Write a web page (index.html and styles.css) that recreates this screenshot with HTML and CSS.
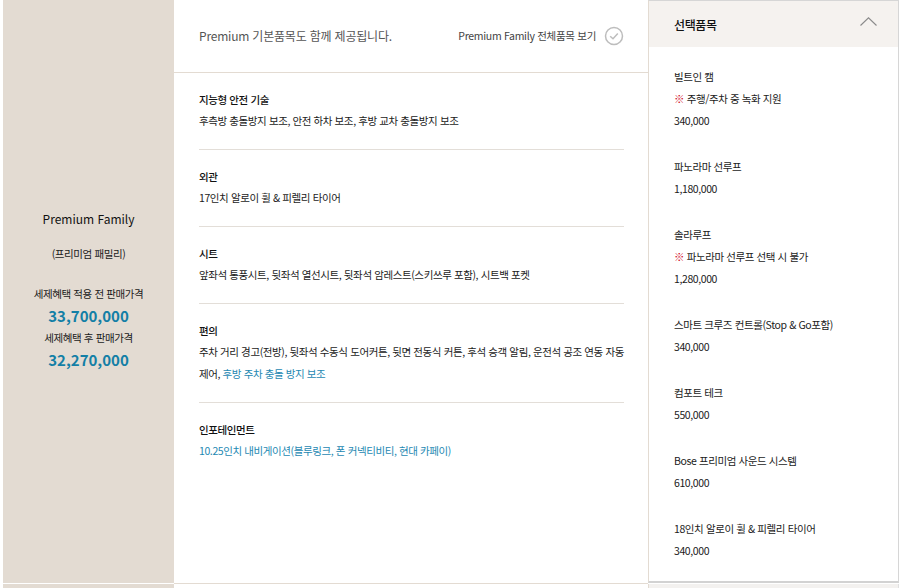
FILE: index.html
```html
<!DOCTYPE html>
<html lang="ko">
<head>
<meta charset="utf-8">
<title>Premium Family</title>
<link rel="stylesheet" href="styles.css">
</head>
<body>
<div class="page">
  <div class="row">
    <div class="trim">
      <p class="trim-name">Premium Family</p>
      <p class="trim-kor">(프리미엄 패밀리)</p>
      <p class="trim-label first">세제혜택 적용 전 판매가격</p>
      <p class="trim-price">33,700,000</p>
      <p class="trim-label">세제혜택 후 판매가격</p>
      <p class="trim-price">32,270,000</p>
    </div>
    <div class="basic">
      <div class="basic-head">
        <span class="basic-note">Premium 기본품목도 함께 제공됩니다.</span>
        <span class="basic-all">Premium Family 전체품목 보기
          <svg class="check" width="20" height="20" viewBox="0 0 20 20"><circle cx="10" cy="10" r="8.5" fill="none" stroke="#bdbdbd" stroke-width="1.5"/><polyline points="6.2,10.2 9,12.8 13.8,7.6" fill="none" stroke="#bdbdbd" stroke-width="1.5"/></svg>
        </span>
      </div>
      <div class="sections">
        <div class="sec">
          <p class="sec-title">지능형 안전 기술</p>
          <p class="sec-body">후측방 충돌방지 보조, 안전 하차 보조, 후방 교차 충돌방지 보조</p>
        </div>
        <div class="sec">
          <p class="sec-title">외관</p>
          <p class="sec-body">17인치 알로이 휠 &amp; 피렐리 타이어</p>
        </div>
        <div class="sec">
          <p class="sec-title">시트</p>
          <p class="sec-body">앞좌석 통풍시트, 뒷좌석 열선시트, 뒷좌석 암레스트(스키쓰루 포함), 시트백 포켓</p>
        </div>
        <div class="sec">
          <p class="sec-title">편의</p>
          <p class="sec-body">주차 거리 경고(전방), 뒷좌석 수동식 도어커튼, 뒷면 전동식 커튼, 후석 승객 알림, 운전석 공조 연동 자동제어, <span class="hl">후방 주차 충돌 방지 보조</span></p>
        </div>
        <div class="sec">
          <p class="sec-title">인포테인먼트</p>
          <p class="sec-body"><span class="hl">10.25인치 내비게이션(블루링크, 폰 커넥티비티, 현대 카페이)</span></p>
        </div>
      </div>
    </div>
    <div class="options">
      <div class="opt-head">
        <span class="opt-title">선택품목</span>
        <svg class="chev" width="17" height="9" viewBox="0 0 17 9"><polyline points="0.5,8.5 8.5,0.8 16.5,8.5" fill="none" stroke="#8a8a8a" stroke-width="1.1"/></svg>
      </div>
      <div class="opt-list">
        <div class="opt">
          <p>빌트인 캠</p>
          <p><span class="mark">※</span> 주행/주차 중 녹화 지원</p>
          <p>340,000</p>
        </div>
        <div class="opt">
          <p>파노라마 선루프</p>
          <p>1,180,000</p>
        </div>
        <div class="opt">
          <p>솔라루프</p>
          <p><span class="mark">※</span> 파노라마 선루프 선택 시 불가</p>
          <p>1,280,000</p>
        </div>
        <div class="opt">
          <p>스마트 크루즈 컨트롤(Stop &amp; Go포함)</p>
          <p>340,000</p>
        </div>
        <div class="opt">
          <p>컴포트 테크</p>
          <p>550,000</p>
        </div>
        <div class="opt">
          <p>Bose 프리미엄 사운드 시스템</p>
          <p>610,000</p>
        </div>
        <div class="opt">
          <p>18인치 알로이 휠 &amp; 피렐리 타이어</p>
          <p>340,000</p>
        </div>
      </div>
    </div>
  </div>
  <div class="row next">
    <div class="trim"></div>
    <div class="basic"></div>
    <div class="options"></div>
  </div>
</div>
</body>
</html>
```

FILE: styles.css
```css
* { box-sizing: border-box; }
html, body { margin: 0; padding: 0; background: #fff; }
body {
  font-family: "Noto Sans CJK KR", "Noto Sans", sans-serif;
  color: #1a1a1a;
  font-size: 10.5px;
  letter-spacing: -0.4px;
}
p { margin: 0; }
.page { margin-left: 3px; width: 896px; }
.row { display: flex; align-items: flex-start; height: 584px; }
.trim {
  width: 171px;
  height: 583px;
  background: #e3dbd2;
  display: flex;
  flex-direction: column;
  justify-content: center;
  align-items: center;
  text-align: center;
  padding-bottom: 4px;
}
.trim-name { font-size: 12px; line-height: 20px; letter-spacing: 0; color: #111; }
.trim-kor { font-size: 10.5px; line-height: 20px; margin-top: 15px; }
.trim-label { line-height: 22px; }
.trim-label.first { margin-top: 19px; }
.trim-price { font-size: 15px; font-weight: 700; line-height: 22px; color: #137fa6; letter-spacing: 0; }

.basic { width: 474px; height: 584px; border-bottom: 1px solid #e3dbd2; }
.basic-head {
  height: 73px;
  border-bottom: 1px solid #e3dbd2;
  display: flex;
  align-items: center;
  justify-content: space-between;
  padding: 0 24px 1px 25px;
}
.basic-note { font-size: 12px; color: #555; letter-spacing: -0.2px; }
.basic-all { display: flex; align-items: center; font-size: 10.5px; color: #444; letter-spacing: -0.3px; }
.check { margin-left: 8px; margin-top: 1px; }
.sections { padding: 0 24px 0 25px; }
.sec { padding: 16px 0 17px; border-top: 1px solid #e3ded8; }
.sec:first-child { border-top: 0; }
.sec-title { line-height: 21px; font-weight: 500; color: #111; }
.sec-body { line-height: 22px; }
.hl { color: #1d88b2; }

.options {
  width: 251px;
  height: 583px;
  border-top: 1px solid #d6d6d6;
  border-left: 1px solid #e3dbd2;
  border-right: 1px solid #d6d6d6;
  border-bottom: 2px solid #d2d2d2;
}
.opt-head {
  height: 46px;
  background: #f5f2ef;
  display: flex;
  align-items: center;
  justify-content: space-between;
  padding: 1px 21px 0 25px;
}
.opt-title { font-size: 12px; font-weight: 500; color: #111; }
.chev { margin-top: -7px; }
.opt-list { padding: 19px 25px; }
.opt { margin-bottom: 24px; }
.opt:last-child { margin-bottom: 0; }
.opt p { line-height: 22px; }
.mark { color: #d0021b; }

.row.next { height: 10px; }
.row.next .trim { height: 10px; }
.row.next .basic { height: 10px; border-bottom: 0; }
.row.next .options { height: 10px; background: #f3f1ef; border-top: 0; border-bottom: 0; border-right: 1px solid #e0e0e0; }
```
